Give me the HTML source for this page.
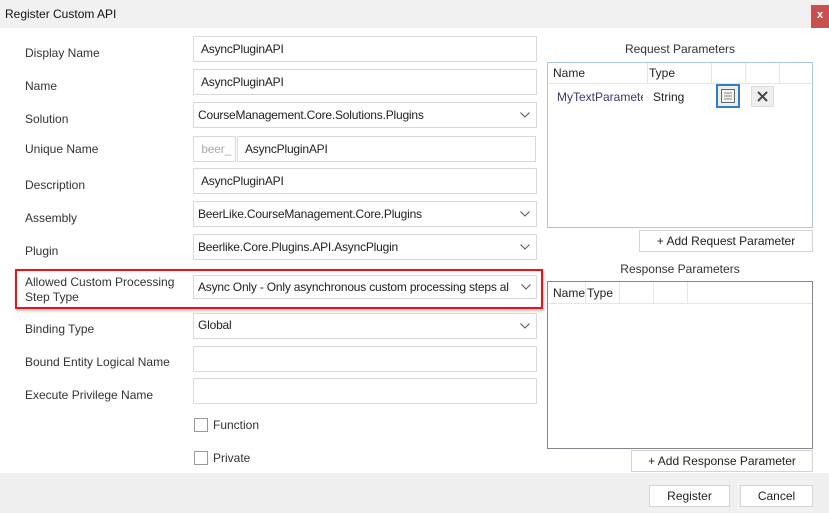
<!DOCTYPE html>
<html><head><style>
*{box-sizing:border-box;margin:0;padding:0}
body{width:829px;height:513px;background:#fff;font-family:"Segoe UI","Liberation Sans",sans-serif;font-size:12px;color:#333;position:relative;overflow:hidden}
.a{position:absolute}
.tb{left:0;top:0;width:829px;height:28px;background:#f1f1f1}
.lbl{left:25px;color:#333;line-height:15px}
.in{border:1px solid #d9d9d9;background:#fff;height:26px;line-height:24px;padding-left:7px;color:#222;white-space:nowrap;overflow:hidden;letter-spacing:-0.2px}
.dd{padding-left:4px}
.chev{position:absolute;right:6px;top:9px;width:10px;height:6px}
.btn{border:1px solid #d4d4d4;background:#fff;text-align:center;line-height:20px;color:#222}
.cb{width:14px;height:14px;border:1px solid #999;background:#fff}
.vl{width:1px;background:#e6e6e6}
</style></head><body>
<div class="a tb"></div>
<div class="a" style="left:5px;top:7px;color:#111">Register Custom API</div>
<div class="a" style="left:811px;top:5px;width:18px;height:23px;background:#c75050;color:#fff;font-weight:bold;text-align:center;line-height:21px;font-size:11px">x</div>

<div class="a lbl" style="top:46px">Display Name</div>
<div class="a in" style="left:193px;top:36px;width:344px">AsyncPluginAPI</div>
<div class="a lbl" style="top:79px">Name</div>
<div class="a in" style="left:193px;top:69px;width:344px">AsyncPluginAPI</div>
<div class="a lbl" style="top:112px">Solution</div>
<div class="a in dd" style="left:193px;top:102px;width:344px">CourseManagement.Core.Solutions.Plugins<svg class="chev" viewBox="0 0 10 6"><path d="M0.5 0.5L5 5L9.5 0.5" fill="none" stroke="#555"/></svg></div>
<div class="a lbl" style="top:142px">Unique Name</div>
<div class="a in" style="left:193px;top:136px;width:43px;color:#aaa;text-align:right;padding-right:4px">beer_</div>
<div class="a in" style="left:237px;top:136px;width:299px;padding-left:7px">AsyncPluginAPI</div>
<div class="a lbl" style="top:178px">Description</div>
<div class="a in" style="left:193px;top:168px;width:344px">AsyncPluginAPI</div>
<div class="a lbl" style="top:211px">Assembly</div>
<div class="a in dd" style="left:193px;top:201px;width:344px">BeerLike.CourseManagement.Core.Plugins<svg class="chev" viewBox="0 0 10 6"><path d="M0.5 0.5L5 5L9.5 0.5" fill="none" stroke="#555"/></svg></div>
<div class="a lbl" style="top:244px">Plugin</div>
<div class="a in dd" style="left:193px;top:234px;width:344px">Beerlike.Core.Plugins.API.AsyncPlugin<svg class="chev" viewBox="0 0 10 6"><path d="M0.5 0.5L5 5L9.5 0.5" fill="none" stroke="#555"/></svg></div>

<div class="a" style="left:15px;top:269px;width:528px;height:40px;border:2px solid #e8141b;box-shadow:1px 2px 3px rgba(0,0,0,.25)"></div>
<div class="a lbl" style="top:275px">Allowed Custom Processing<br>Step Type</div>
<div class="a in dd" style="left:193px;top:275px;width:344px;height:24px;line-height:22px;padding-right:22px">Async Only - Only asynchronous custom processing steps al<svg class="chev" style="top:8px;background:#fff;width:16px;right:2px;padding:0 3px" viewBox="0 0 10 6"><path d="M0.5 0.5L5 5L9.5 0.5" fill="none" stroke="#555"/></svg></div>

<div class="a lbl" style="top:322px">Binding Type</div>
<div class="a in dd" style="left:193px;top:313px;width:344px;line-height:22px">Global<svg class="chev" viewBox="0 0 10 6"><path d="M0.5 0.5L5 5L9.5 0.5" fill="none" stroke="#555"/></svg></div>
<div class="a lbl" style="top:355px">Bound Entity Logical Name</div>
<div class="a in" style="left:193px;top:346px;width:344px"></div>
<div class="a lbl" style="top:388px">Execute Privilege Name</div>
<div class="a in" style="left:193px;top:378px;width:344px"></div>
<div class="a cb" style="left:194px;top:418px"></div>
<div class="a" style="left:213px;top:418px">Function</div>
<div class="a cb" style="left:194px;top:451px"></div>
<div class="a" style="left:213px;top:451px">Private</div>

<div class="a" style="left:547px;top:42px;width:266px;text-align:center">Request Parameters</div>
<div class="a" style="left:547px;top:62px;width:266px;height:166px;border:1px solid #a9c8e0">
 <div class="a" style="left:0;top:20px;width:264px;height:1px;background:#e6e6e6"></div>
 <div class="a vl" style="left:99px;top:0;height:20px"></div>
 <div class="a vl" style="left:163px;top:0;height:20px"></div>
 <div class="a vl" style="left:197px;top:0;height:20px"></div>
 <div class="a vl" style="left:231px;top:0;height:20px"></div>
 <div class="a" style="left:5px;top:3px;color:#222">Name</div>
 <div class="a" style="left:101px;top:3px;color:#222">Type</div>
 <div class="a" style="left:9px;top:27px;color:#3a3a6e;width:86px;overflow:hidden;white-space:nowrap">MyTextParameter</div>
 <div class="a" style="left:105px;top:27px;color:#222">String</div>
 <div class="a" style="left:168px;top:21px;width:24px;height:24px;border:2px solid #2b7fd0;background:#eee">
  <svg width="20" height="20" style="position:absolute;left:0;top:0"><rect x="3.5" y="3.5" width="13" height="13" fill="#f4f4f4" stroke="#666"/><path d="M6 7h8M6 10h8M6 13h8" stroke="#888"/></svg>
 </div>
 <div class="a" style="left:203px;top:23px;width:23px;height:21px;border:1px solid #ddd;background:#eee">
  <svg width="21" height="19"><path d="M6 5l9 9M15 5l-9 9" stroke="#444" stroke-width="2"/></svg>
 </div>
</div>
<div class="a btn" style="left:639px;top:230px;width:174px;height:22px">+ Add Request Parameter</div>

<div class="a" style="left:547px;top:262px;width:266px;text-align:center">Response Parameters</div>
<div class="a" style="left:547px;top:281px;width:266px;height:168px;border:1px solid #828790">
 <div class="a" style="left:0;top:21px;width:264px;height:1px;background:#e6e6e6"></div>
 <div class="a vl" style="left:37px;top:0;height:21px"></div>
 <div class="a vl" style="left:71px;top:0;height:21px"></div>
 <div class="a vl" style="left:105px;top:0;height:21px"></div>
 <div class="a vl" style="left:139px;top:0;height:21px"></div>
 <div class="a" style="left:5px;top:4px;color:#222;width:32px;overflow:hidden;white-space:nowrap">Name</div>
 <div class="a" style="left:39px;top:4px;color:#222">Type</div>
</div>
<div class="a btn" style="left:631px;top:450px;width:182px;height:22px">+ Add Response Parameter</div>

<div class="a" style="left:0;top:473px;width:829px;height:40px;background:#f0f0f0"></div>
<div class="a btn" style="left:649px;top:485px;width:81px;height:22px">Register</div>
<div class="a btn" style="left:740px;top:485px;width:73px;height:22px">Cancel</div>
</body></html>
